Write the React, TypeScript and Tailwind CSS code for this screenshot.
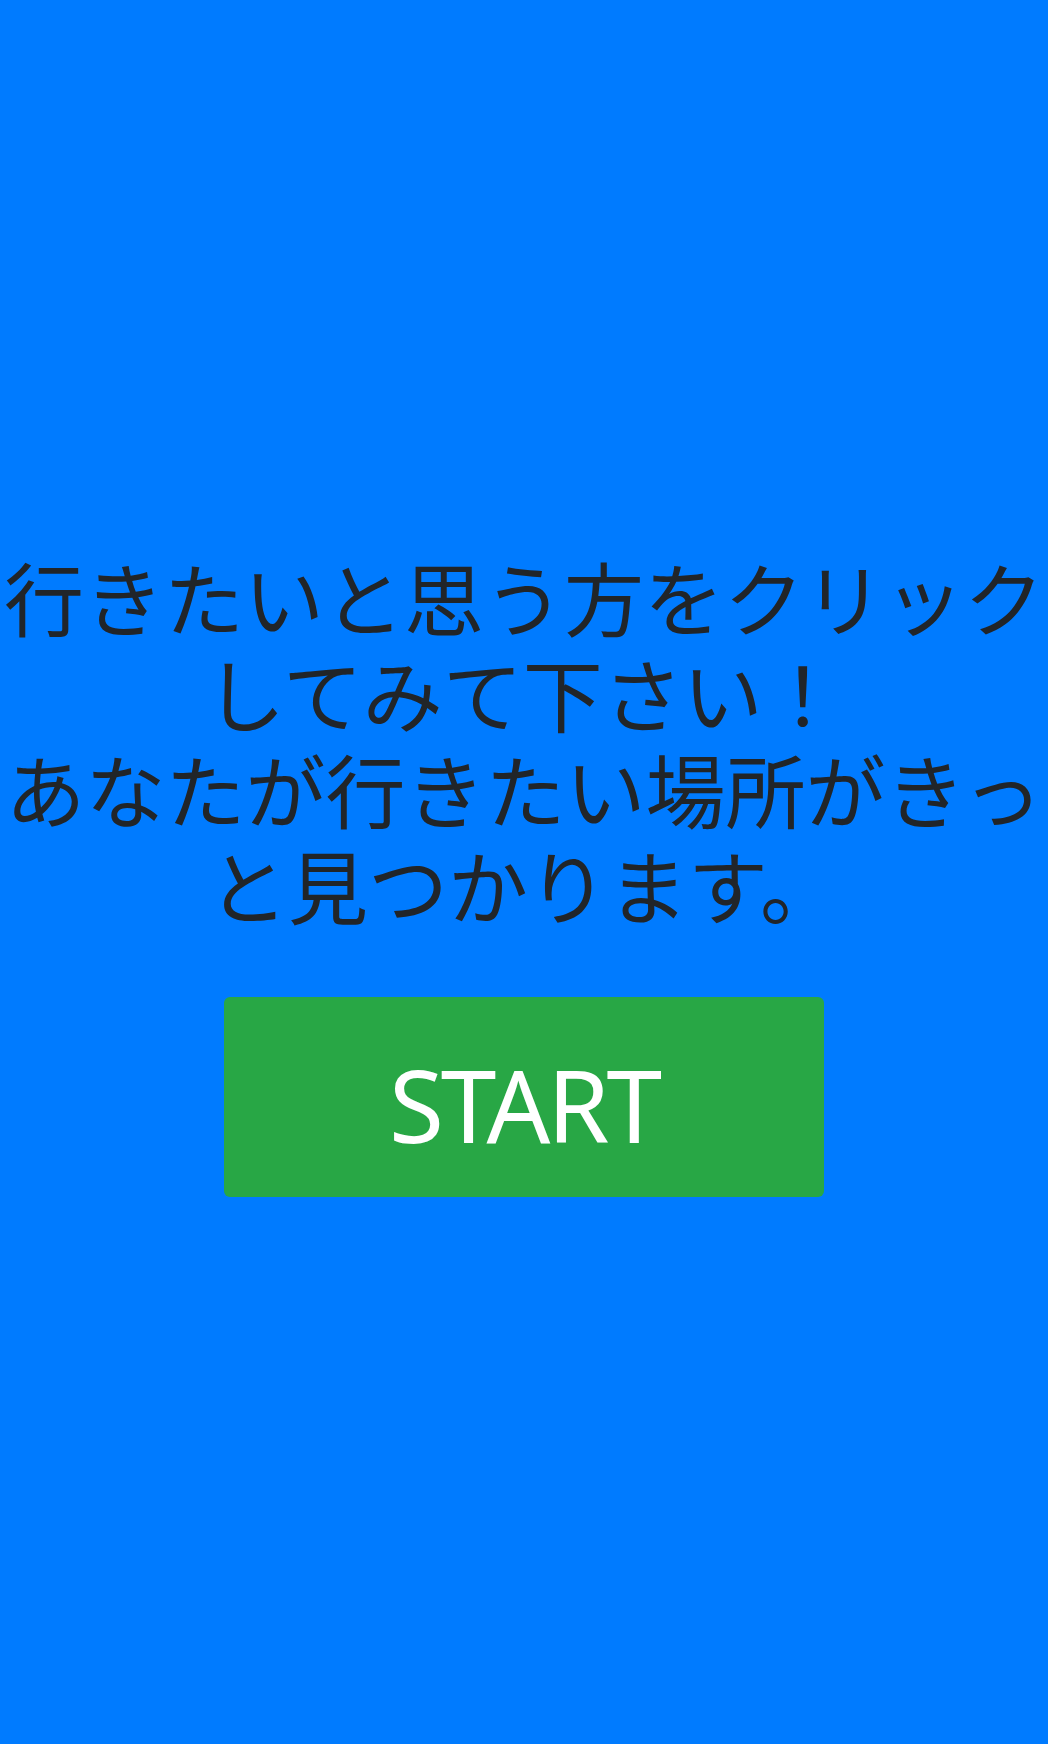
export default function App() {
  const lines = ["行きたいと思う方をクリック", "してみて下さい！", "あなたが行きたい場所がきっ", "と見つかります。"];

  return (
    <div
      className="flex h-screen w-full flex-col items-center justify-center bg-[#007bff]"
      style={{ fontFamily: '"Noto Sans CJK JP", "Noto Sans", sans-serif' }}
    >
      <h1 className="m-0 text-center text-[80px] font-normal leading-[1.2] text-[#212529]">
        {lines.map((line) => (
          <span key={line} className="block whitespace-nowrap">
            {line}
          </span>
        ))}
      </h1>

      <button
        type="button"
        className="mt-[66px] flex h-[200px] w-[600px] items-center justify-center rounded-[6px] bg-[#28a745] pt-[14px] text-[100px] leading-none tracking-[-3px] text-white"
        style={{ fontFamily: '"Noto Sans", sans-serif' }}
      >
        START
      </button>
    </div>
  );
}
